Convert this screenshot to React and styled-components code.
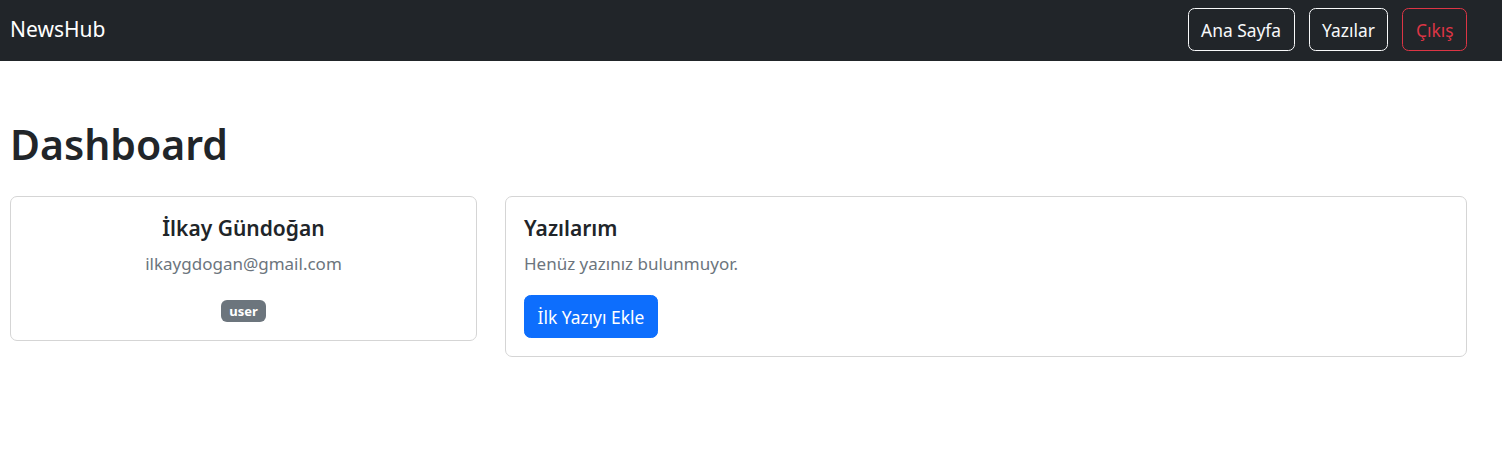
import styled, { createGlobalStyle } from "styled-components";

const GlobalStyle = createGlobalStyle`
  * {
    box-sizing: border-box;
  }
  body {
    margin: 0;
    background: #fff;
    color: #212529;
    font-family: "Noto Sans", "Open Sans", sans-serif;
    font-size: 17px;
    line-height: 26.4px;
  }
`;

export default function App() {
  return (
    <>
      <GlobalStyle />
      <Navbar>
        <Brand href="#">NewsHub</Brand>
        <NavButtons>
          <NavButton>Ana Sayfa</NavButton>
          <NavButton>Yazılar</NavButton>
          <NavButton danger>Çıkış</NavButton>
        </NavButtons>
      </Navbar>

      <Main>
        <Title>Dashboard</Title>
        <CardRow>
          <Card center>
            <CardTitle>İlkay Gündoğan</CardTitle>
            <Muted>ilkaygdogan@gmail.com</Muted>
            <BadgeLine>
              <Badge>user</Badge>
            </BadgeLine>
          </Card>
          <Card>
            <CardTitle>Yazılarım</CardTitle>
            <Muted>Henüz yazınız bulunmuyor.</Muted>
            <PrimaryButton>İlk Yazıyı Ekle</PrimaryButton>
          </Card>
        </CardRow>
      </Main>
    </>
  );
}

const Navbar = styled.nav`
  display: flex;
  align-items: center;
  justify-content: space-between;
  height: 61px;
  padding: 0 35px 2px 10px;
  background: #212529;
`;

const Brand = styled.a`
  color: #fff;
  font-size: 21px;
  text-decoration: none;
`;

const NavButtons = styled.div`
  display: flex;
  gap: 14px;
`;

const NavButton = styled.button`
  height: 43px;
  padding: 0 12.5px;
  font-family: inherit;
  font-size: 17.4px;
  color: ${(p) => (p.danger ? "#dc3545" : "#f8f9fa")};
  background: transparent;
  border: 1px solid ${(p) => (p.danger ? "#dc3545" : "#f8f9fa")};
  border-radius: 6.6px;
  cursor: pointer;
`;

const Main = styled.main`
  padding: 59px 35px 0 10px;
`;

const Title = styled.h1`
  margin: 0 0 27px;
  font-size: 41px;
  font-weight: 600;
  line-height: 1.2;
`;

const CardRow = styled.div`
  display: grid;
  grid-template-columns: 467px 1fr;
  gap: 28px;
  align-items: start;
`;

const Card = styled.div`
  display: flex;
  flex-direction: column;
  align-items: ${(p) => (p.center ? "center" : "flex-start")};
  padding: 18px;
  border: 1px solid #d5d5d5;
  border-radius: 7px;
`;

const CardTitle = styled.h5`
  margin: 0 0 9px;
  font-size: 21px;
  font-weight: 600;
  line-height: 26.4px;
`;

const Muted = styled.p`
  margin: 0 0 18px;
  color: #6c757d;
`;

const BadgeLine = styled.div`
  display: flex;
  padding-top: 5px;
`;

const Badge = styled.span`
  display: inline-block;
  padding: 5px 8px;
  font-size: 13px;
  font-weight: 700;
  line-height: 12px;
  color: #fff;
  background: #6c757d;
  border-radius: 6px;
`;

const PrimaryButton = styled.button`
  height: 43px;
  padding: 0 12.5px;
  font-family: inherit;
  font-size: 17.4px;
  color: #fff;
  background: #0d6efd;
  border: 1px solid #0d6efd;
  border-radius: 6.6px;
  cursor: pointer;
`;
